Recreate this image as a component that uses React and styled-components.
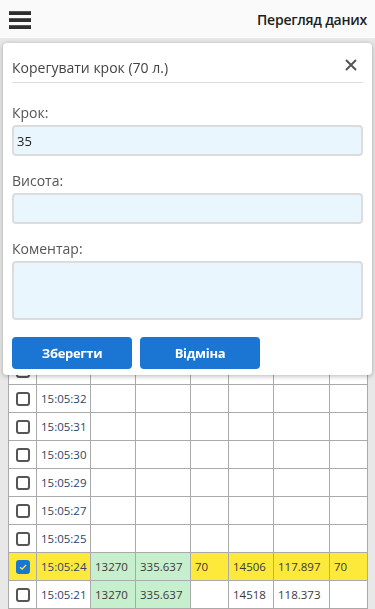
import * as React from 'react';
import styled, { createGlobalStyle } from 'styled-components';

const GlobalStyle = createGlobalStyle`
  html, body {
    margin: 0;
    padding: 0;
    background: #e8e8e8;
    font-family: "Open Sans", "Noto Sans", sans-serif;
    overflow: hidden;
  }
  * { box-sizing: border-box; }
`;

// rows above 15:05:32 sit under the dialog
const rows = [
  ...Array.from({ length: 11 }, () => ({ time: '' })),
  { time: '15:05:32' },
  { time: '15:05:31' },
  { time: '15:05:30' },
  { time: '15:05:29' },
  { time: '15:05:27' },
  { time: '15:05:25' },
  { time: '15:05:24', checked: true, vals: ['13270', '335.637', '70', '14506', '117.897', '70'] },
  { time: '15:05:21', vals: ['13270', '335.637', '', '14518', '118.373', ''] },
];

function App() {
  return (
    <>
      <GlobalStyle />
      <Page>
        <TopBar>
          <Burger aria-label="menu">
            <span /><span /><span />
          </Burger>
          <PageTitle>Перегляд даних</PageTitle>
        </TopBar>
        <Content>
          <Grid>
            <Row>
              <Cell /><Cell /><Cell /><Cell /><Cell /><Cell /><Cell /><Cell />
            </Row>
            {rows.map((r, n) => (
              <Row key={n} $hl={r.checked}>
                <Cell $center>
                  <Check $on={r.checked}>
                    {r.checked && (
                      <svg width="10" height="10" viewBox="0 0 10 10">
                        <path d="M2 5.2 L4.2 7.2 L8 3" fill="none" stroke="#fde93a" strokeWidth="1.3" />
                      </svg>
                    )}
                  </Check>
                </Cell>
                <Cell $time>{r.time}</Cell>
                {[0, 1, 2, 3, 4, 5].map((i) => (
                  <Cell key={i} $green={r.vals && i < 2}>
                    {r.vals ? r.vals[i] : ''}
                  </Cell>
                ))}
              </Row>
            ))}
          </Grid>
        </Content>

        <Dialog>
          <DialogHead>
            <DialogTitle>Корегувати крок (70 л.)</DialogTitle>
            <Close aria-label="close">
              <svg width="12" height="12" viewBox="0 0 12 12">
                <path d="M1 1 L11 11 M11 1 L1 11" stroke="#555" strokeWidth="2" />
              </svg>
            </Close>
          </DialogHead>
          <Field>
            <Label>Крок:</Label>
            <Input defaultValue="35" />
          </Field>
          <Field>
            <Label>Висота:</Label>
            <Input />
          </Field>
          <Field>
            <Label>Коментар:</Label>
            <Area />
          </Field>
          <Buttons>
            <Button>Зберегти</Button>
            <Button>Відміна</Button>
          </Buttons>
        </Dialog>
      </Page>
    </>
  );
}
export default App;

const Page = styled.div`
  width: 375px;
  height: 609px;
  overflow: hidden;
  background: #e8e8e8;
`;

const TopBar = styled.div`
  height: 38px;
  background: #fafafa;
  display: flex;
  align-items: center;
  justify-content: space-between;
  padding: 0 8px 0 9px;
`;

const Burger = styled.div`
  display: flex;
  flex-direction: column;
  gap: 3px;
  margin-top: 1px;
  span {
    display: block;
    width: 22px;
    height: 4px;
    background: #2e2e2e;
    border-top: 1px solid #555;
  }
`;

const PageTitle = styled.div`
  font-size: 14px;
  font-weight: 600;
  color: #1e1e1e;
  letter-spacing: -0.25px;
`;

const Content = styled.div`
  padding: 10px 7px 0 8px;
`;

const Grid = styled.div`
  width: 360px;
  border-left: 1px solid #aaa;
  border-top: 1px solid #aaa;
  background: #fff;
`;

const Row = styled.div`
  display: grid;
  grid-template-columns: 28px 54px 45px 55px 38px 45px 56px 38px;
  height: 28px;
  background: ${(p) => (p.$hl ? '#fde93a' : '#fff')};
`;

const Cell = styled.div`
  border-right: 1px solid #aaa;
  border-bottom: 1px solid #aaa;
  display: flex;
  align-items: center;
  justify-content: ${(p) => (p.$center ? 'center' : 'flex-start')};
  padding-left: ${(p) => (p.$center ? '0' : '4px')};
  font-size: 11.5px;
  color: ${(p) => (p.$time ? '#2f4466' : '#3a3a3a')};
  background: ${(p) => (p.$green ? '#c6efce' : 'transparent')};
  white-space: nowrap;
  overflow: hidden;
`;

const Check = styled.div`
  width: 14px;
  height: 14px;
  border-radius: 3px;
  border: 2px solid ${(p) => (p.$on ? '#1976d2' : '#555')};
  background: ${(p) => (p.$on ? '#1976d2' : '#fff')};
  display: flex;
  align-items: center;
  justify-content: center;
`;

const Dialog = styled.div`
  position: fixed;
  left: 3px;
  top: 43px;
  width: 369px;
  height: 332px;
  background: #fff;
  border-radius: 4px;
  box-shadow: 0 1px 5px rgba(0, 0, 0, 0.3);
  padding: 0 9px;
`;

const DialogHead = styled.div`
  display: flex;
  align-items: center;
  justify-content: space-between;
  padding: 16px 0 5px;
  border-bottom: 1px solid #ddd;
  margin-bottom: 21px;
`;

const DialogTitle = styled.div`
  font-size: 14px;
  line-height: 18px;
  color: #444;
`;

const Close = styled.div`
  display: flex;
  margin: -6px 6px 0 0;
`;

const Field = styled.div`
  display: flex;
  flex-direction: column;
  margin-bottom: 16px;
`;

const Label = styled.div`
  font-size: 14px;
  line-height: 18px;
  color: #555;
  margin-bottom: 3px;
`;

const Input = styled.input`
  height: 31px;
  border: 2px solid #dcdcdc;
  border-radius: 4px;
  background: #eaf6fd;
  padding: 0 3px;
  font-family: inherit;
  font-size: 13px;
  color: #222;
  outline: none;
`;

const Area = styled.textarea`
  height: 59px;
  border: 2px solid #dcdcdc;
  border-radius: 4px;
  background: #eaf6fd;
  resize: none;
  outline: none;
`;

const Buttons = styled.div`
  display: flex;
  gap: 8px;
  margin-top: 17px;
`;

const Button = styled.button`
  width: 120px;
  height: 32px;
  border: none;
  border-radius: 4px;
  background: #1a76d2;
  color: #fff;
  font-family: inherit;
  font-weight: 700;
  font-size: 13px;
  letter-spacing: -0.3px;
`;
